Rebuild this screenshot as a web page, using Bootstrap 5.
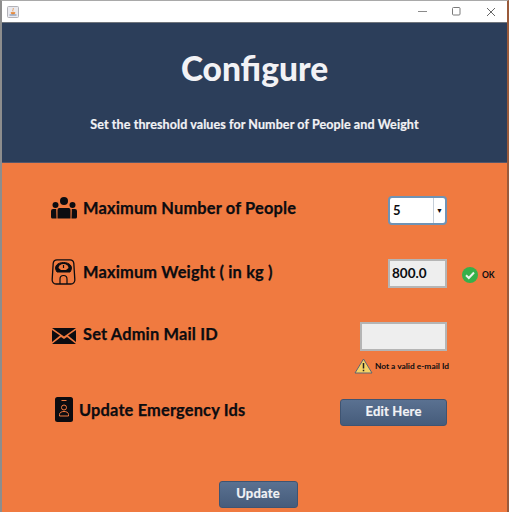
<!DOCTYPE html>
<html lang="en">

    <head>
        <meta charset="UTF-8">
        <meta name="viewport" content="width=device-width, initial-scale=1.0">
        <title>Configure</title>
        <!-- Bootstrap CSS -->
        <link href="https://cdn.jsdelivr.net/npm/bootstrap@5.3.0/dist/css/bootstrap.min.css" rel="stylesheet">

        <style>
            html, body {
                height: 512px;
                overflow: hidden;
            }

            body {
                background-color: #f07a40;
                font-family: Lato, "Noto Sans", sans-serif;
                border-top: 1px solid #a9a9a9;
                border-left: 2px solid #8d8d8d;
                border-right: 2px solid #9a5a3a;
            }

            .title-bar {
                height: 22px;
                background-color: #fff;
                padding-left: 5px;
                padding-right: 11px;
                border-bottom: 1px solid #70757c;
            }

            .win-btns {
                gap: 25px;
            }

            .head-panel {
                height: 140px;
                background-color: #2c3e5a;
                color: #f2f2f5;
                padding-top: 24px;
                border-bottom: 1px solid #55566a;
            }

            .head-title {
                font-size: 33.500px;
                line-height: 42px;
                font-weight: 900;
                margin: 0;
            }

            .head-sub {
                font-size: 12.500px;
                line-height: 16px;
                font-weight: 700;
                margin: 0;
                padding-top: 28px;
                letter-spacing: .1px;
                -webkit-text-stroke: .2px #f2f2f5;
            }

            .form-area {
                height: 349px;
                padding: 33px 60px 0 49px;
                color: #0c0c10;
            }

            .cfg-row {
                height: 63px;
            }

            .cfg-row-tall {
                height: 77px;
            }

            .cfg-label {
                font-size: 16.400px;
                line-height: 24px;
                font-weight: 700;
                margin: 0;
                letter-spacing: .17px;
                -webkit-text-stroke: .25px #0c0c10;
            }

            .cfg-label-raised {
                padding-bottom: 4px;
            }

            .cfg-group-raised {
                margin-top: -2px;
            }

            .cfg-icon {
                width: 26px;
                margin-right: 6px;
                flex-shrink: 0;
            }

            .cfg-icon-narrow {
                width: 18px;
                margin-left: 4px;
                margin-right: 6px;
            }

            .cfg-control {
                width: 108px;
                position: relative;
            }

            .combo {
                width: 59px;
                height: 29px;
                background-color: #fff;
                border: 2px solid #6f93b5;
                border-radius: 4px;
                font-size: 13px;
                font-weight: 700;
                padding-left: 3px;
            }

            .combo-arrow {
                width: 12px;
                height: 100%;
                border-left: 1px solid #c5ced8;
                font-size: 7px;
            }

            .field {
                display: block;
                height: 29px;
                background-color: #eeeeee;
                border: 2px solid #b5b5b5;
                border-radius: 0;
                padding: 0 2px;
                font-size: 13.500px;
                line-height: 25px;
                font-weight: 700;
                color: #0c0c10;
            }

            .field-short {
                width: 59px;
            }

            .field-long {
                width: 87px;
            }

            .status-ok {
                position: absolute;
                left: 123px;
                top: 8px;
                font-size: 8.500px;
                font-weight: 700;
                gap: 4px;
            }

            .status-warn {
                position: absolute;
                right: -2px;
                top: 36px;
                font-size: 8.400px;
                font-weight: 700;
                white-space: nowrap;
                gap: 2px;
            }

            .blue-btn {
                background: linear-gradient(#5a7191, #465c7b);
                color: #f2f3f6;
                border: 1px solid #3f5472;
                border-radius: 3px;
                font-size: 13px;
                font-weight: 700;
                padding: 0 0 2px;
                letter-spacing: .2px;
                -webkit-text-stroke: .2px #f2f3f6;
            }

            .edit-btn {
                width: 107px;
                height: 27px;
            }

            .update-btn {
                width: 79px;
                height: 27px;
                margin-top: 19px;
                margin-left: 18px;
            }
        </style>
    </head>

    <body>
        <div class="title-bar d-flex align-items-center justify-content-between">
            <svg width="12" height="12" viewBox="0 0 12 12">
                <rect x=".5" y=".5" width="11" height="11" rx="1" fill="#e9e9ee" stroke="#b2b2b8"/>
                <path d="M6 2c1 1-.8 2 0 3.500M4 6.500h4l-.6 1.500H4.600z" fill="#e58a3c" stroke="#e58a3c" stroke-width=".7"/>
                <path d="M2.500 8.500h7v1h-7z" fill="#6d87ad"/>
            </svg>
            <div class="win-btns d-flex align-items-center">
                <svg width="9" height="9" viewBox="0 0 9 9"><path d="M0 4.500h9" stroke="#8a8a8a"/></svg>
                <svg width="9" height="9" viewBox="0 0 9 9"><rect x=".5" y=".5" width="7.500" height="7.500" rx="1" fill="none" stroke="#7a7a7a"/></svg>
                <svg width="10" height="10" viewBox="0 0 10 10"><path d="M1 1l8 8M9 1l-8 8" stroke="#666"/></svg>
            </div>
        </div>

        <div class="head-panel text-center">
            <h1 class="head-title">Configure</h1>
            <p class="head-sub">Set the threshold values for Number of People and Weight</p>
        </div>

        <div class="form-area d-flex flex-column">
            <div class="cfg-row d-flex justify-content-between align-items-start">
                <div class="d-flex align-items-center">
                    <svg class="cfg-icon" height="22" viewBox="0 0 26 22" fill="#0c0c10">
                        <circle cx="13" cy="4" r="4"/>
                        <circle cx="4.500" cy="8" r="3"/>
                        <circle cx="21.500" cy="8" r="3"/>
                        <path d="M8 11h10a2 2 0 0 1 1.500 2v8.500h-13V13A2 2 0 0 1 8 11z"/>
                        <path d="M5.200 12H2a2 2 0 0 0-2 2v6a1.500 1.500 0 0 0 1.500 1.500h4zM20.800 12H24a2 2 0 0 1 2 2v6a1.500 1.500 0 0 1-1.500 1.500h-4z"/>
                    </svg>
                    <h2 class="cfg-label">Maximum Number of People</h2>
                </div>
                <div class="cfg-control d-flex justify-content-end">
                    <div class="combo d-flex align-items-center justify-content-between">
                        <span>5</span>
                        <span class="combo-arrow d-flex align-items-center justify-content-center">&#9660;</span>
                    </div>
                </div>
            </div>

            <div class="cfg-row d-flex justify-content-between align-items-start">
                <div class="d-flex align-items-center">
                    <svg class="cfg-icon" height="26" viewBox="0 0 26 26" fill="none" stroke="#0c0c10">
                        <path d="M6 .8h13a4 4 0 0 1 3.800 3.500l1 16a4 4 0 0 1-4 4.700H5.200a4 4 0 0 1-4-4.700l1-16A4 4 0 0 1 6 .8z" stroke-width="1.300"/>
                        <path d="M6 13C2 7 7 3.500 12.500 3.500S23 7 19 13z" fill="#0c0c10"/>
                        <path d="M7.500 9a5 4 0 0 1 10 0l-2.500 2h-5z" fill="#f07a40" stroke="none"/>
                        <path d="M12.500 6v3" stroke-width="1.200"/>
                        <path d="M9 25v-5a3.500 3.500 0 0 1 7 0v5" stroke-width="1.200"/>
                    </svg>
                    <h2 class="cfg-label">Maximum Weight ( in kg )</h2>
                </div>
                <div class="cfg-control d-flex justify-content-end">
                    <span class="field field-short">800.0</span>
                    <div class="status-ok d-flex align-items-center">
                        <svg width="16" height="16" viewBox="0 0 16 16">
                            <circle cx="8" cy="8" r="8" fill="#36b04a"/>
                            <path d="M4 8.300l2.800 2.700L12 5.500" fill="none" stroke="#e8f3ea" stroke-width="2"/>
                        </svg>
                        <span>OK</span>
                    </div>
                </div>
            </div>

            <div class="cfg-row-tall d-flex justify-content-between align-items-start">
                <div class="d-flex align-items-center">
                    <svg class="cfg-icon" height="16" viewBox="0 0 24 16" fill="#0c0c10">
                        <path d="M0 0h24L12 8.500z"/>
                        <path d="M0 2v12l8-6.500zM24 2v12l-8-6.500z"/>
                        <path d="M0 16h24l-9-7-3 2-3-2z"/>
                    </svg>
                    <h2 class="cfg-label cfg-label-raised">Set Admin Mail ID</h2>
                </div>
                <div class="cfg-control d-flex flex-column align-items-end">
                    <span class="field field-long"></span>
                    <div class="status-warn d-flex align-items-center">
                        <svg width="19" height="16" viewBox="0 0 19 16">
                            <path d="M9.500 1L18 15H1z" fill="#f6d365" stroke="#5d6472" stroke-linejoin="round"/>
                            <path d="M9.500 5v5.500M9.500 11.800v1.500" stroke="#222" stroke-width="1.500"/>
                        </svg>
                        <span>Not a valid e-mail Id</span>
                    </div>
                </div>
            </div>

            <div class="cfg-row d-flex justify-content-between align-items-start">
                <div class="cfg-group-raised d-flex align-items-center">
                    <svg class="cfg-icon cfg-icon-narrow" height="25" viewBox="0 0 18 25" fill="#0c0c10">
                        <rect x="0" y="0" width="18" height="25" rx="2.500"/>
                        <path d="M6.500 3.500h5" stroke="#f07a40"/>
                        <circle cx="9" cy="10.500" r="2.500" fill="none" stroke="#f07a40"/>
                        <path d="M4.500 19v-1.500c0-2 2-3 4.500-3s4.500 1 4.500 3V19z" fill="none" stroke="#f07a40"/>
                    </svg>
                    <h2 class="cfg-label">Update Emergency Ids</h2>
                </div>
                <div class="cfg-control d-flex justify-content-end">
                    <button type="button" class="btn blue-btn edit-btn">Edit Here</button>
                </div>
            </div>

            <div class="d-flex justify-content-center">
                <button type="button" class="btn blue-btn update-btn">Update</button>
            </div>
        </div>

        <script src="https://cdn.jsdelivr.net/npm/bootstrap@5.3.0/dist/js/bootstrap.bundle.min.js"></script>
    </body>

</html>
